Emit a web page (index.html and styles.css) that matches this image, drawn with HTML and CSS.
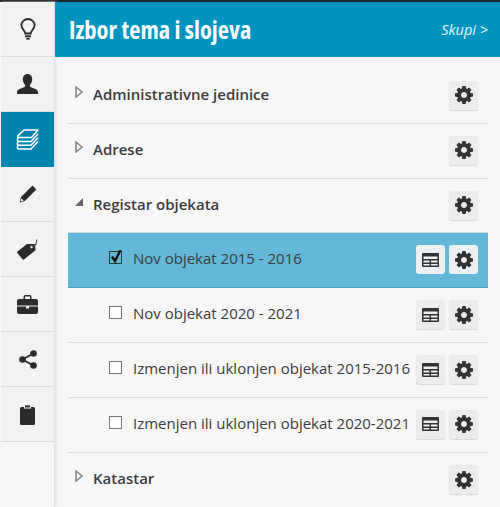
FILE: index.html
```html
<!DOCTYPE html>
<html>
<head>
<meta charset="utf-8">
<title>Izbor tema i slojeva</title>
<link rel="stylesheet" href="styles.css">
</head>
<body>
<svg width="0" height="0" class="defs">
  <symbol id="gear" viewBox="128 128 1536 1536"><path fill-rule="evenodd" d="M1152 896q0-106-75-181t-181-75-181 75-75 181 75 181 181 75 181-75 75-181zm512-109v222q0 12-8 23t-20 13l-185 28q-19 54-39 91 35 50 107 138 10 12 10 25t-9 23q-27 37-99 108t-94 71q-12 0-26-9l-138-108q-44 23-91 38-16 136-29 186-7 28-36 28h-222q-14 0-24.500-8.500t-11.500-21.500l-28-184q-49-16-90-37l-141 107q-10 9-25 9-14 0-25-11-126-114-165-168-7-10-7-23 0-12 8-23 15-21 51-66.500t54-70.500q-27-50-41-99l-183-27q-13-2-21-12.500t-8-23.500v-222q0-12 8-23t19-13l186-28q14-46 39-92-40-57-107-138-10-12-10-24 0-10 9-23 26-36 98.500-107.500t94.500-71.500q13 0 26 10l138 107q44-23 91-38 16-136 29-186 7-28 36-28h222q14 0 24.500 8.500t11.500 21.500l28 184q49 16 90 37l142-107q9-9 24-9 13 0 25 10 129 119 165 170 7 8 7 22 0 12-8 23-15 21-51 66.500t-54 70.500q26 50 41 98l183 28q13 2 21 12.500t8 23.500z"/></symbol>
  <symbol id="table" viewBox="0 0 17 14"><path fill-rule="evenodd" d="M1 0h15a1 1 0 0 1 1 1v12a1 1 0 0 1-1 1H1a1 1 0 0 1-1-1V1a1 1 0 0 1 1-1zM1.500 3.500v2.500h14V3.500zm0 4V9.500h6V7.500zm7.500 0V9.500h6.500V7.500zM1.500 11v1.500h6V11zm7.500 0v1.500h6.500V11z"/></symbol>
</svg>
<div class="app">
  <nav class="rail">
    <a class="rail-item">
      <svg viewBox="0 0 16 22" width="16" height="22" fill="none" stroke="#2b2b2b" stroke-width="1.800"><path d="M5.300 15.500c0-2.500-3.900-4.500-3.900-8.400a6.600 6.100 0 0 1 13.200 0c0 3.900-3.900 5.900-3.900 8.400z"/><path d="M5 18.300h6" stroke-width="2"/><path d="M6.300 20.800h3.400" stroke-width="1.600"/></svg>
    </a>
    <a class="rail-item">
      <svg viewBox="0 0 21 20" width="21" height="20" fill="#2b2b2b"><path d="M10.500 0c2.900 0 4.700 2.300 4.700 5.300 0 2.100-.9 4-2 5.100-.7.800-.5 2.100.4 2.600 2.600 1.300 7.400 2 7.400 5.300V20H0v-1.700c0-3.300 4.800-4 7.400-5.300.9-.5 1.100-1.800.4-2.600-1.100-1.100-2-3-2-5.100C5.800 2.300 7.600 0 10.500 0z"/></svg>
    </a>
    <a class="rail-item active">
      <svg viewBox="0 0 23 21" width="23" height="21" fill="none" stroke="#fff" stroke-width="1.500" stroke-linejoin="round" stroke-linecap="round"><path d="M8 1h14l-6.500 7.500H2.500c-1-.3-1-1.200-.4-1.900z"/><path d="M2.500 8.500c-1.600 1.500-1.600 3.400 0 3.900h12.500l6.500-7"/><path d="M2.500 12.400c-1.600 1.500-1.600 3.400 0 3.900h12.500l6.500-7"/><path d="M2.500 16.300c-1.600 1.500-1.600 3.300 0 3.700h12.500l6.500-7"/></svg>
    </a>
    <a class="rail-item">
      <svg viewBox="0 0 18 18" width="18" height="18"><path d="M13.500.6l3.900 3.900-11.500 11.500L.6 17.400 2 12.100z" fill="#2b2b2b"/><path d="M2.300 13.300l2.400 2.400-3.200.8z" fill="#f2f2f2"/></svg>
    </a>
    <a class="rail-item">
      <svg viewBox="0 0 21 21" width="21" height="21"><path d="M10 5h7.200a1 1 0 0 1 1 1l.3 5.300L7.300 20.300a1.400 1.400 0 0 1-2-.2L.6 14.300a1.400 1.400 0 0 1 .2-2z" fill="#2b2b2b"/><circle cx="14.700" cy="8" r="1.300" fill="#f2f2f2"/><path d="M14.700 8c3-.5 5.200-3 5-7.500" fill="none" stroke="#555" stroke-width="1.100"/></svg>
    </a>
    <a class="rail-item">
      <svg viewBox="0 0 21 19" width="21" height="19" fill="#2b2b2b"><path fill-rule="evenodd" d="M6.500 4V2a2 2 0 0 1 2-2h4a2 2 0 0 1 2 2v2H19a2 2 0 0 1 2 2v4.500H0V6a2 2 0 0 1 2-2zM8 4h5V1.500H8z"/><path d="M0 11.500h9v2h3v-2h9V17a2 2 0 0 1-2 2H2a2 2 0 0 1-2-2z"/></svg>
    </a>
    <a class="rail-item">
      <svg viewBox="0 0 18 19" width="18" height="19" fill="#2b2b2b"><circle cx="14.500" cy="3.500" r="3.300"/><circle cx="3.500" cy="9.500" r="3.300"/><circle cx="14.500" cy="15.500" r="3.300"/><path d="M14.500 3.500l-11 6 11 6" fill="none" stroke="#2b2b2b" stroke-width="1.800"/></svg>
    </a>
    <a class="rail-item">
      <svg viewBox="0 0 15 21" width="15" height="21" fill="#2b2b2b"><path d="M1.500 3H4v1.500h7V3h2.500A1.500 1.500 0 0 1 15 4.500V19.500a1.500 1.500 0 0 1-1.500 1.500h-12A1.500 1.500 0 0 1 0 19.500V4.500A1.500 1.500 0 0 1 1.500 3z"/><path d="M5 1.500h1.800a.9.9 0 0 1 1.400 0H10v2H5z"/></svg>
    </a>
    <div class="rail-rest"></div>
  </nav>
  <main class="panel">
    <header class="panel-head">
      <h1>Izbor tema i slojeva</h1>
      <a class="collapse">Skupi &gt;</a>
    </header>
    <ul class="tree">
      <li class="row group">
        <span class="arrow"><svg viewBox="0 0 8 12" width="8" height="12"><path d="M1 1l6 5-6 5z" fill="none" stroke="#888" stroke-width="1.600"/></svg></span>
        <span class="label">Administrativne jedinice</span>
        <span class="tools"><button class="tool"><svg class="ico-gear"><use href="#gear"/></svg></button></span>
      </li>
      <li class="row group">
        <span class="arrow"><svg viewBox="0 0 8 12" width="8" height="12"><path d="M1 1l6 5-6 5z" fill="none" stroke="#888" stroke-width="1.600"/></svg></span>
        <span class="label">Adrese</span>
        <span class="tools"><button class="tool"><svg class="ico-gear"><use href="#gear"/></svg></button></span>
      </li>
      <li class="row group">
        <span class="arrow"><svg viewBox="0 0 8 12" width="8" height="12"><path d="M8 2v8H0z" fill="#666"/></svg></span>
        <span class="label">Registar objekata</span>
        <span class="tools"><button class="tool"><svg class="ico-gear"><use href="#gear"/></svg></button></span>
      </li>
      <li class="row layer selected">
        <span class="check checked">
          <svg viewBox="0 0 14 14" width="14" height="14"><path d="M3 6.500l3 4.500L11.500 0" fill="none" stroke="#111" stroke-width="2.400"/></svg>
        </span>
        <span class="name">Nov objekat 2015 - 2016</span>
        <span class="tools"><button class="tool"><svg class="ico-table"><use href="#table"/></svg></button><button class="tool"><svg class="ico-gear"><use href="#gear"/></svg></button></span>
      </li>
      <li class="row layer">
        <span class="check"></span>
        <span class="name">Nov objekat 2020 - 2021</span>
        <span class="tools"><button class="tool"><svg class="ico-table"><use href="#table"/></svg></button><button class="tool"><svg class="ico-gear"><use href="#gear"/></svg></button></span>
      </li>
      <li class="row layer">
        <span class="check"></span>
        <span class="name">Izmenjen ili uklonjen objekat 2015-2016</span>
        <span class="tools"><button class="tool"><svg class="ico-table"><use href="#table"/></svg></button><button class="tool"><svg class="ico-gear"><use href="#gear"/></svg></button></span>
      </li>
      <li class="row layer">
        <span class="check"></span>
        <span class="name">Izmenjen ili uklonjen objekat 2020-2021</span>
        <span class="tools"><button class="tool"><svg class="ico-table"><use href="#table"/></svg></button><button class="tool"><svg class="ico-gear"><use href="#gear"/></svg></button></span>
      </li>
      <li class="row group last">
        <span class="arrow"><svg viewBox="0 0 8 12" width="8" height="12"><path d="M1 1l6 5-6 5z" fill="none" stroke="#888" stroke-width="1.600"/></svg></span>
        <span class="label">Katastar</span>
        <span class="tools"><button class="tool"><svg class="ico-gear"><use href="#gear"/></svg></button></span>
      </li>
    </ul>
  </main>
</div>
</body>
</html>
```

FILE: styles.css
```css
* {box-sizing: border-box;}

html, body {
  margin: 0;
  height: 100%;
  overflow: hidden;
}

body {
  background-color: #f7f7f7;
  font-family: "Open Sans", sans-serif;
  color: #3c3c3c;
}

.defs {
  display: block;
  height: 0;
}

.app {
  display: flex;
  height: 507px;
  padding-top: 2px;
  background: linear-gradient(#23282d 2px, #f7f7f7 2px);
}

.rail {
  width: 55px;
  flex: none;
  display: flex;
  flex-direction: column;
  padding-left: 1px;
  border-right: 1px solid #e0e0e0;
  box-shadow: 2px 0 2px #e8e8e8;
}

.rail-item {
  height: 55px;
  flex: none;
  display: flex;
  align-items: center;
  justify-content: center;
  background-color: #f2f2f2;
  border-bottom: 1px solid #ddd;
}

.rail-item.active {
  background-color: #0084ae;
  border-bottom: none;
}

.rail-rest {
  flex: 1;
}

.panel {
  flex: 1;
  min-width: 0;
}

.panel-head {
  height: 55px;
  background-color: #0094bf;
  color: #fff;
  display: flex;
  align-items: center;
  justify-content: space-between;
  padding: 0 12px 0 14px;
}

.panel-head h1 {
  margin: 0;
  font-size: 24.5px;
  font-weight: 700;
  font-stretch: 75%;
  white-space: nowrap;
}

.collapse {
  font-size: 14.5px;
  font-style: italic;
  color: #e4f4f9;
}

.tree {
  list-style: none;
  margin: 0 12px 0 13px;
  padding: 12px 0 0;
}

.row {
  height: 54.83px;
  display: flex;
  align-items: center;
  border-bottom: 1px solid #ddd;
  padding: 0 10px 1px 0;
}

.row.last {
  border-bottom: none;
}

.row.selected {
  background-color: #62b8d6;
  border-bottom: 1px solid #4f9db6;
}

.row.selected .tool {
  background-color: #ecf0f2;
  box-shadow: none;
}

.arrow {
  flex: none;
  width: 8px;
  height: 12px;
  margin: 0 10px 7px 7px;
  display: flex;
}

.label {
  flex: 1;
  font-size: 15px;
  font-weight: 600;
  margin-bottom: 3px;
}

.layer {
  padding-left: 41px;
}

.check {
  width: 13px;
  height: 13px;
  flex: none;
  margin: 0 11px 4px 0;
  border: 1px solid #777;
  background-color: #fff;
  position: relative;
}

.check svg {
  position: absolute;
  left: -1px;
  top: -2px;
}

.check.checked {
  border-color: #333;
  background-color: #62b8d6;
}

.name {
  flex: 1;
  white-space: nowrap;
  font-size: 15px;
  margin-bottom: 3px;
  min-width: 0;
}

.tools {
  display: flex;
  gap: 4px;
  margin-left: auto;
  flex: none;
}

.tool {
  width: 29px;
  height: 29px;
  padding: 0;
  border: none;
  border-radius: 3px;
  background-color: #ececec;
  box-shadow: 0 1px 1px #d8d8d8;
  display: flex;
  align-items: center;
  justify-content: center;
}

.ico-gear {
  width: 18px;
  height: 18px;
  fill: #333;
}

.ico-table {
  width: 17px;
  height: 14px;
  fill: #333;
}
```
